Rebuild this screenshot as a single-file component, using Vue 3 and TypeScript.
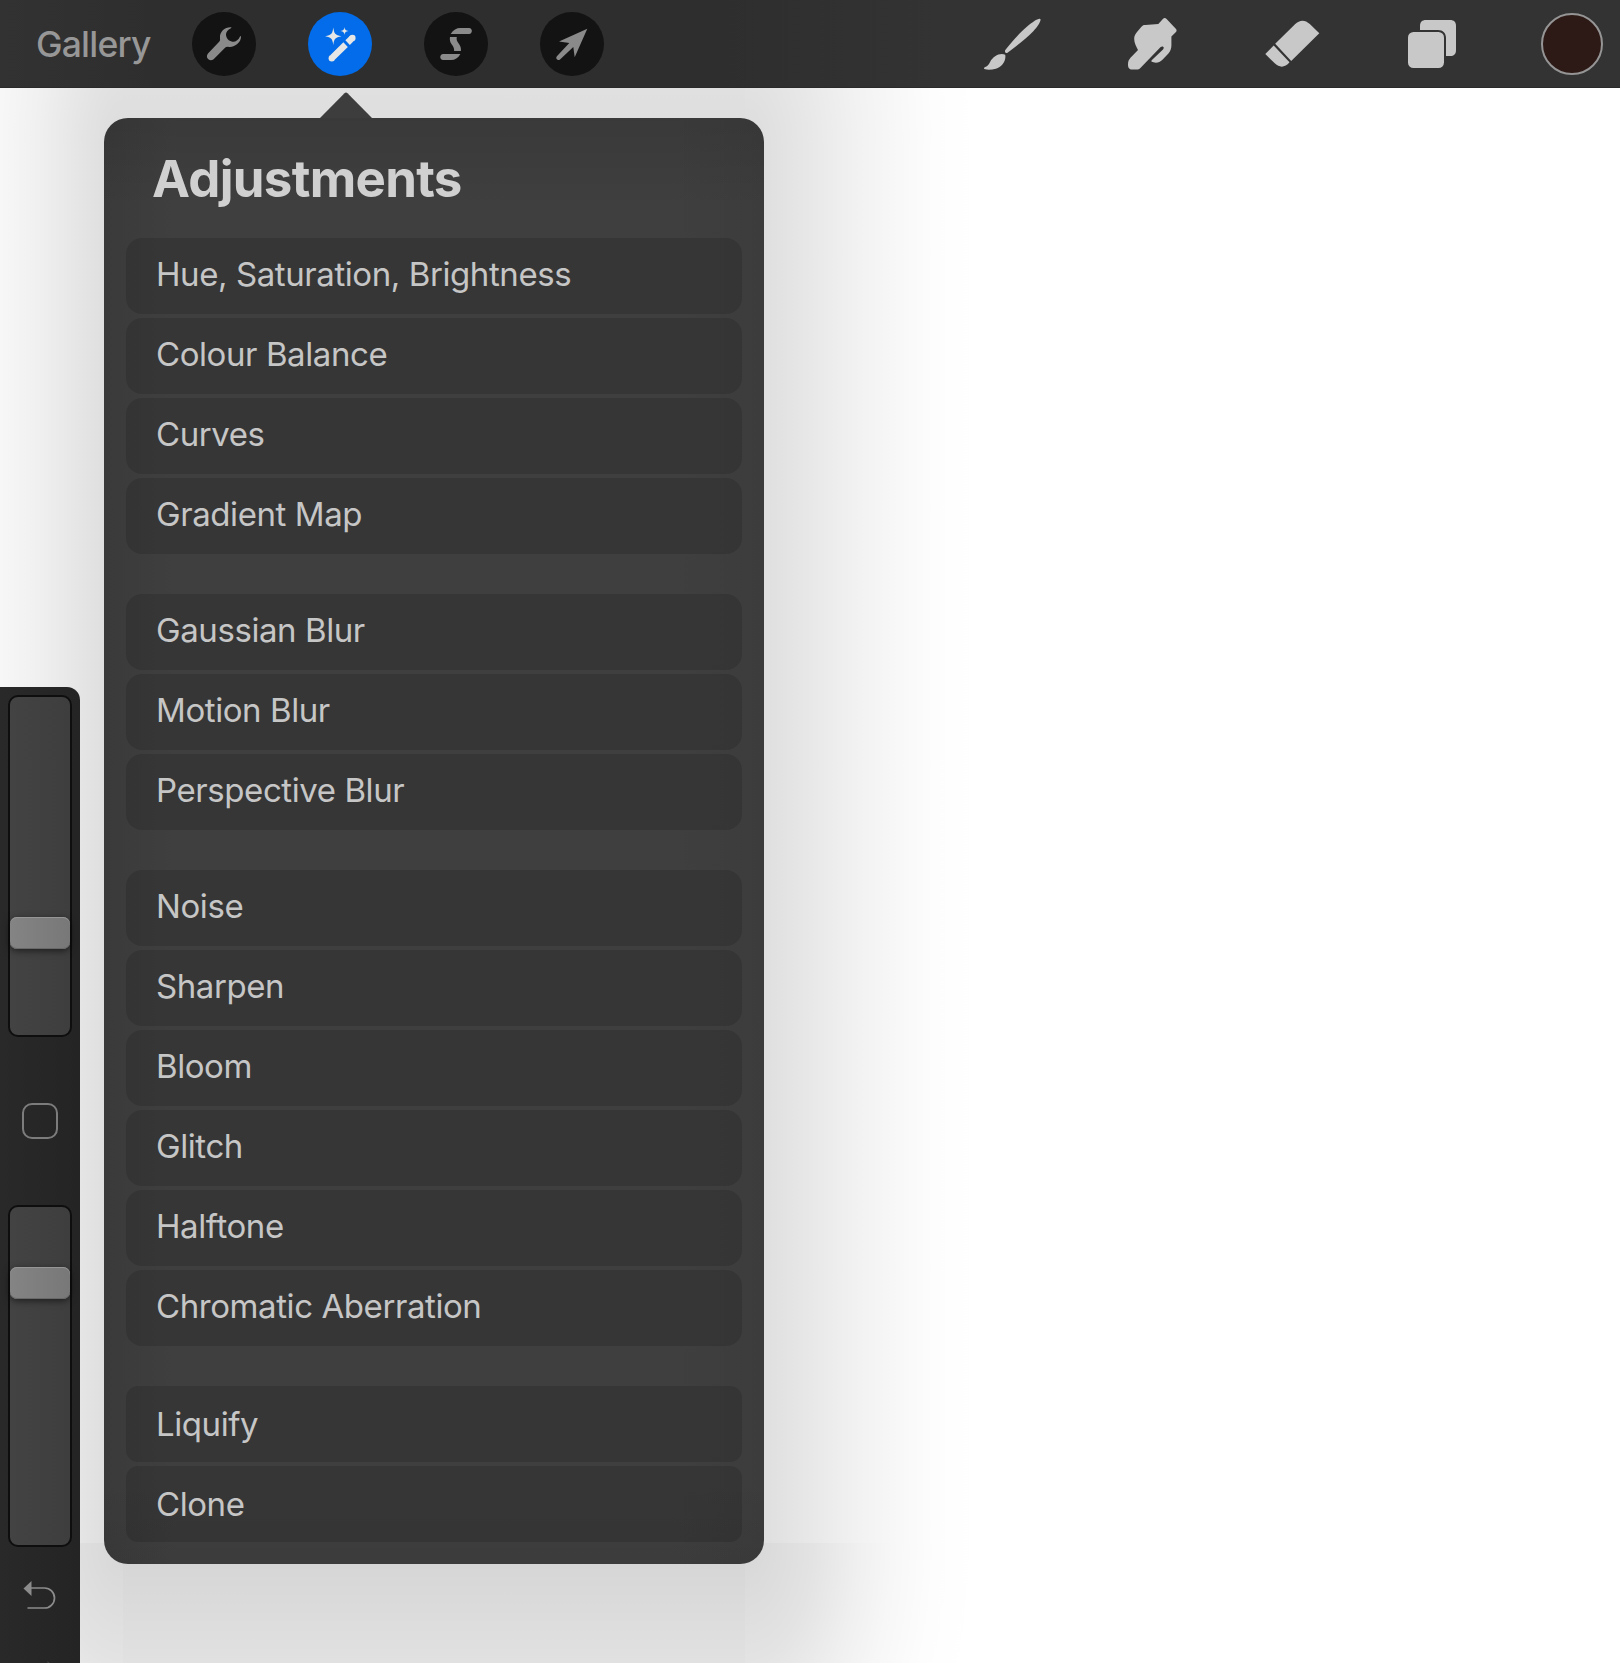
<script setup lang="ts">
const groups: string[][] = [
  ['Hue, Saturation, Brightness', 'Colour Balance', 'Curves', 'Gradient Map'],
  ['Gaussian Blur', 'Motion Blur', 'Perspective Blur'],
  ['Noise', 'Sharpen', 'Bloom', 'Glitch', 'Halftone', 'Chromatic Aberration'],
  ['Liquify', 'Clone'],
]
</script>

<template>
  <div class="app">
    <header class="topbar">
      <div class="left">
        <span class="gallery">Gallery</span>
        <button class="round" aria-label="Actions">
          <svg viewBox="0 0 64 64"><path fill="#8a8a8a" d="M39.2 15.3C33 14.9 27.4 19.6 28 26c.1 1.500.2 2.700-.6 3.500L16 41.600c-3.200 3.800 1.500 9 5.600 5.600L33.300 35.600c.9-.9 2-.8 3.600-.7 6.500.4 11.900-4.700 12.100-9.900-.1-1.300-.6-1.200-1-.5-1.500 3.500-4.500 5.800-7.700 5.300-3.500-.6-6.300-3.500-6.300-7.200 0-2.600 1.800-5 4.900-6.400.7-.4.700-.9.300-.9z" /></svg>
        </button>
        <button class="round active" aria-label="Adjustments">
          <svg viewBox="0 0 64 64">
            <path fill="#e6e6e6" d="M25.300 15.500c.9 6.200 1.700 7.500 8.200 8.700-6.500 1.200-7.300 2.500-8.200 8.700-.9-6.200-1.700-7.500-8.200-8.700 6.500-1.200 7.300-2.500 8.200-8.700zM36.500 15c.4 2.700 1 3.400 4 4-3 .6-3.600 1.300-4 4-.4-2.700-1-3.400-4-4 3-.6 3.600-1.300 4-4z" />
            <g stroke="#e6e6e6" stroke-width="6.400"><path d="M24.500 45.500 37.600 32.600M39.600 30.600l4.400-4.300" /></g>
            <circle cx="23.800" cy="46.200" r="3.200" fill="#e6e6e6" /><circle cx="44.400" cy="25.900" r="3.200" fill="#e6e6e6" />
          </svg>
        </button>
        <button class="round" aria-label="Selection">
          <svg viewBox="0 0 64 64"><path fill="#8a8a8a" d="M26.700 22c2.600-4.200 5.800-6 9.600-6h8.800c3.700 0 3.700 6 0 6zM26 25h6.800c-.7 3.200.5 4.500 2.200 6.900 1.700 2.500 2.200 4.600 1.900 7.100h-6.800c.2-2.900-.7-4.300-2.300-6.400C26 30.200 25.500 27.800 26 25zM19.200 42h17.200c-2.300 4.200-5.500 6-9.300 6h-7.900c-3.900 0-3.900-6 0-6z" /></svg>
        </button>
        <button class="round" aria-label="Transform">
          <svg viewBox="0 0 64 64"><path fill="#8a8a8a" d="M47.300 16.700 34.700 45.200 33.300 34.900 20 47.400c-2.100 1.900-5-1-3.100-3.100L29.300 31l-10.300-1.600z" /></svg>
        </button>
      </div>
      <div class="tools">
        <svg class="tool brush" viewBox="0 0 58 52"><path fill="#c8c8c8" d="M56.300 1c1.200 1.200-2.200 7.200-7 12.200C42.500 20.300 33 27.800 23.500 34.700c-1.700 1-3.200-1-2.200-2.700C28.500 23 37 13.500 44 7.800 48.500 4.200 54.500-.2 56.300 1zM21.200 36.700c1.200 6.300-3.400 12.400-9.300 14-3.800 1-8 1.200-10.700.6-1.800-.4-1.600-1.600 0-2.200 2.500-.8 3.800-3 5-5.300 3-5.600 9.500-9.300 15-7.100z" /></svg>
        <svg class="tool smudge" viewBox="0 0 50 52"><path fill="#c8c8c8" d="M30.300 6.100 34.900 1c1.200-1.300 2.500-1.200 3.700 0l9.200 9.700c1.100 1.200 1 2.400-.1 3.500L43.400 18.500v9c0 3.300-1.200 5.900-3.200 8.200l-6 6.300c-2.200 2.200-5.800 3.300-8.700 2.200-2.500-.3-2.700-1.200-1.300-2.400L35 31.500c2-2.300-.4-4.300-2.600-2.300L12.400 50.100c-.7.900-1.500 1.300-2.600 1.300H4c-3.300 0-4-2.500-4-5 0-3.300.9-4.700 2.500-6.700L10 32c-2-3.500-4-7.600-3.800-11.700.1-2.600 1.200-4.500 2.800-6.400l4.200-4.900c1.100-1.500 2.100-2.100 4.100-2.100z" /></svg>
        <svg class="tool eraser" viewBox="0 0 56 48"><path fill="#c8c8c8" d="M10.200 23.800 30 4.300c4.800-4.800 10-4.800 14.800-.2L54.300 13.300 26.200 41zM8.700 25.400 24.500 42.300c-4.400 5.500-10 5.600-14.500 1.300L.3 34z" /></svg>
        <svg class="tool layers" viewBox="0 0 48 48"><path fill="#c8c8c8" d="M12 10V6c0-4 2-6 6-6h24c4 0 6 2 6 6v24c0 4-2 6-6 6h-4V18c0-5-3-8-8-8z" /><rect y="12" width="36" height="36" rx="5.500" fill="#c8c8c8" /></svg>
        <span class="color"></span>
      </div>
    </header>

    <main class="canvas">
      <div class="shadow">
        <i class="tl"></i><i class="t"></i><i class="tr"></i>
        <i class="l"></i><i></i><i class="r"></i>
        <i class="bl"></i><i class="b"></i><i class="br"></i>
      </div>

      <aside class="sidebar">
        <div class="slider"><span class="thumb size"></span></div>
        <span class="modify"></span>
        <div class="slider"><span class="thumb opacity"></span></div>
        <svg class="undo" viewBox="0 0 34 90"><path fill="#8c8c8c" d="M.5 8.500 8.500 1v15z" /><path fill="none" stroke="#8c8c8c" stroke-width="1.700" d="M8 8h13.500a10 10 0 0 1 0 20H4.500" /><path fill="#444" d="m24.500 81 8 7.500-8 7.500z" /></svg>
      </aside>

      <section class="popover">
        <svg class="arrow" viewBox="0 0 52 26"><path fill="#3d3d3d" d="M0 26 24.500 1.200q1.500-1.500 3 0L52 26z" /></svg>
        <h1>Adjustments</h1>
        <ul v-for="(g, i) in groups" :key="i">
          <li v-for="item in g" :key="item"><span>{{ item }}</span></li>
        </ul>
      </section>
    </main>
  </div>
</template>

<style>
body { margin: 0; overflow: hidden; }
</style>

<style scoped>
.app { width: 1620px; height: 1663px; display: flex; flex-direction: column; overflow: hidden; background: #fff; font-family: Inter, "Liberation Sans", sans-serif; }
.topbar { height: 88px; flex: none; box-sizing: border-box; display: flex; justify-content: space-between; padding: 12px 17px 0 36px; background: linear-gradient(90deg, #323232 0, #2e2e2e 160px, #2e2e2e 720px, #333 940px); box-shadow: inset 0 -1px #2a2a2a; }
.left { display: flex; gap: 52px; }
.gallery { width: 104px; font-size: 35.500px; line-height: 66px; font-weight: 500; letter-spacing: -.8px; color: #979797; white-space: nowrap; }
.round { width: 64px; height: 64px; padding: 0; border: 0; border-radius: 50%; background: #131313; }
.round.active { background: #026cea; }
.round svg { display: block; width: 64px; height: 64px; }
.tools { display: flex; align-items: flex-start; }
.tool { display: block; flex: none; }
.brush { width: 58px; height: 52px; margin: 6px 86px 0 0; }
.smudge { width: 50px; height: 52px; margin: 6px 87px 0 0; }
.eraser { width: 56px; height: 48px; margin: 8px 87px 0 0; }
.layers { width: 48px; height: 48px; margin: 8px 85px 0 0; }
.color { box-sizing: border-box; width: 62px; height: 62px; margin-top: 1px; border: 2px solid #959595; border-radius: 50%; background: #2d1a17; }
.canvas { position: relative; flex: 1; display: flex; align-items: flex-start; }
.shadow { position: absolute; inset: 0; display: grid; grid-template-columns: 123px 622px 875px; grid-template-rows: 55px 1400px 120px; }
.r { background: linear-gradient(90deg, rgba(0,0,0,.137) 0, rgba(0,0,0,.125) 19px, rgba(0,0,0,.096) 62px, rgba(0,0,0,.052) 115px, rgba(0,0,0,.030) 148px, rgba(0,0,0,.008) 190px, transparent 235px); }
.l { background: linear-gradient(270deg, rgba(0,0,0,.137) 0, rgba(0,0,0,.125) 19px, rgba(0,0,0,.100) 43px, rgba(0,0,0,.060) 85px, rgba(0,0,0,.031) 123px); }
.t { background: linear-gradient(0deg, rgba(0,0,0,.137), rgba(0,0,0,.122)); }
.b { background: linear-gradient(180deg, rgba(0,0,0,.161) 21px, rgba(0,0,0,.118) 120px); }
.tr { background: radial-gradient(235px 400px at 0 100%, rgba(0,0,0,.137) 0, rgba(0,0,0,.125) 8%, rgba(0,0,0,.096) 26%, rgba(0,0,0,.052) 49%, rgba(0,0,0,.030) 63%, rgba(0,0,0,.008) 81%, transparent); }
.tl { background: radial-gradient(190px 400px at 100% 100%, rgba(0,0,0,.137) 0, rgba(0,0,0,.125) 10%, rgba(0,0,0,.100) 23%, rgba(0,0,0,.060) 45%, rgba(0,0,0,.031) 65%, transparent); }
.br { background: radial-gradient(235px 400px at 0 0, rgba(0,0,0,.163) 0, rgba(0,0,0,.145) 8%, rgba(0,0,0,.108) 29%, rgba(0,0,0,.057) 49%, rgba(0,0,0,.032) 63%, rgba(0,0,0,.008) 81%, transparent); }
.bl { background: radial-gradient(235px 400px at 100% 0, rgba(0,0,0,.163) 0, rgba(0,0,0,.145) 8%, rgba(0,0,0,.108) 29%, rgba(0,0,0,.057) 49%, rgba(0,0,0,.032) 63%, rgba(0,0,0,.008) 81%, transparent); }
.sidebar { position: relative; box-sizing: border-box; width: 80px; height: 976px; margin-top: 599px; padding-top: 8px; border-radius: 0 13px 0 0; background: linear-gradient(90deg, #292929, #242424); display: flex; flex-direction: column; align-items: center; overflow: hidden; }
.slider { position: relative; flex: none; box-sizing: border-box; width: 64px; height: 342px; border: 2px solid #0e0e0e; border-radius: 10px; background: linear-gradient(90deg, #434343, #3e3e3e); }
.thumb { position: absolute; left: 0; width: 60px; height: 32px; border-radius: 7px; background: linear-gradient(90deg, #848484, #787878); box-shadow: inset 0 1px #969696, inset 0 -1px #686868, 0 2px 7px rgba(0,0,0,.55); }
.size { top: 220px; }
.opacity { top: 60px; }
.modify { flex: none; box-sizing: border-box; width: 36px; height: 36px; margin: 66px 0; border: 2px solid #7c7c7c; border-radius: 10px; }
.undo { flex: none; width: 34px; height: 90px; margin: 33px 0 0 0; }
.popover { position: relative; box-sizing: border-box; width: 660px; height: 1446px; margin: 30px 0 0 24px; padding: 0 22px; border-radius: 24px; background: linear-gradient(180deg, rgba(0,0,0,.09), transparent 90px, transparent 1360px, rgba(0,0,0,.05)), linear-gradient(90deg, #3a3a3a, #3f3f3f 70px, #3f3f3f 570px, #3c3c3c); }
.arrow { position: absolute; left: 216px; top: -26px; width: 52px; height: 26px; }
h1 { margin: 0; height: 120px; padding: 0 0 0 26px; font-size: 51px; line-height: 122px; font-weight: 700; letter-spacing: -.7px; color: #d0d0d0; white-space: nowrap; }
ul { margin: 0 0 40px; padding: 0; list-style: none; display: flex; flex-direction: column; gap: 4px; }
li { box-sizing: border-box; height: 76px; padding-left: 30px; border-radius: 16px; background: rgba(0,0,0,.13); font-size: 33px; line-height: 72px; letter-spacing: -.42px; color: #c6c6c6; white-space: nowrap; }
ul:last-child li { border-radius: 12px; line-height: 76px; }
</style>
